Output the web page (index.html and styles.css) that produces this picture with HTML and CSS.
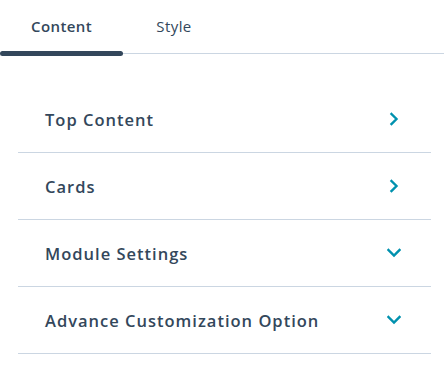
FILE: index.html
```html
<!DOCTYPE html>
<html lang="en">
<head>
    <meta charset="UTF-8">
    <meta name="viewport" content="width=device-width, initial-scale=1.0">
    <title>Module editor</title>
    <link rel="stylesheet" href="styles.css">
</head>
<body>
    <div class="tabs">
        <div class="tab active">Content</div>
        <div class="tab">Style</div>
    </div>

    <div class="groups">
        <div class="group">
            <span>Top Content</span>
            <svg class="chev" width="14" height="14" viewBox="0 0 14 14"><path d="M4.5 2 L9.5 7 L4.5 12" /></svg>
        </div>
        <div class="group">
            <span>Cards</span>
            <svg class="chev" width="14" height="14" viewBox="0 0 14 14"><path d="M4.5 2 L9.5 7 L4.5 12" /></svg>
        </div>
        <div class="group">
            <span>Module Settings</span>
            <svg class="chev" width="14" height="14" viewBox="0 0 14 14"><path d="M1.5 4 L7 9.5 L12.5 4" /></svg>
        </div>
        <div class="group">
            <span>Advance Customization Option</span>
            <svg class="chev" width="14" height="14" viewBox="0 0 14 14"><path d="M1.5 4 L7 9.5 L12.5 4" /></svg>
        </div>
    </div>
</body>
</html>
```

FILE: styles.css
```css
:root {
    --text-color: #33475b;
    --line-color: #cbd6e2;
    --accent-color: #0091ae;
}
body {
    margin: 0;
    background-color: #fff;
    font-family: "Open Sans", "Noto Sans", sans-serif;
    color: var(--text-color);
}

.tabs {
    display: flex;
    height: 54px;
    border-bottom: 1px solid var(--line-color);
    box-sizing: border-box;
}
.tab {
    width: 123px;
    box-sizing: border-box;
    padding-top: 16px;
    text-align: center;
    font-size: 15px;
    position: relative;
    letter-spacing: 0.4px;
}
.tab + .tab {
    width: 102px;
}
.tab.active {
    font-weight: 600;
}
.tab.active::after {
    content: "";
    position: absolute;
    left: 0;
    right: 0;
    bottom: -3px;
    height: 5px;
    border-radius: 3px;
    background-color: var(--text-color);
}

.groups {
    margin: 32px 13px 0 18px;
}
.group {
    height: 66px;
    display: flex;
    align-items: center;
    justify-content: space-between;
    padding: 0 30px 0 27px;
    border-bottom: 1px solid var(--line-color);
    font-size: 16.5px;
    font-weight: 600;
    letter-spacing: 1px;
}
.chev {
    fill: none;
    stroke: var(--accent-color);
    stroke-width: 2.4;
    stroke-linecap: square;
}
```
